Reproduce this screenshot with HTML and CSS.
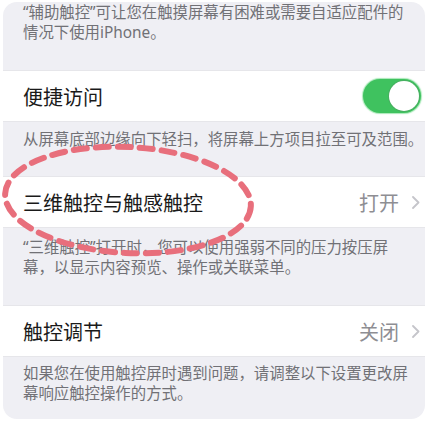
FILE: index.html
```html
<!DOCTYPE html>
<html lang="zh-CN">
<head>
<meta charset="utf-8">
<link rel="stylesheet" href="styles.css">
</head>
<body>
<div class="page">
  <div class="card">
    <p class="note note-top">“辅助触控”可让您在触摸屏幕有困难或需要自适应配件的<br>情况下使用iPhone。</p>
    <div class="row">
      <span class="label">便捷访问</span>
      <span class="toggle"><span class="knob"></span></span>
    </div>
    <p class="note">从屏幕底部边缘向下轻扫，将屏幕上方项目拉至可及范围。</p>
    <div class="row">
      <span class="label">三维触控与触感触控</span>
      <span class="value">打开</span>
      <svg class="chev" width="8" height="13" viewBox="0 0 8 13"><polyline points="1,1 6.5,6.5 1,12" fill="none" stroke="#c5c5ca" stroke-width="1.8" stroke-linecap="round" stroke-linejoin="round"/></svg>
    </div>
    <p class="note note-2">“三维触控”打开时，您可以使用强弱不同的压力按压屏<br>幕，以显示内容预览、操作或关联菜单。</p>
    <div class="row">
      <span class="label">触控调节</span>
      <span class="value">关闭</span>
      <svg class="chev" width="8" height="13" viewBox="0 0 8 13"><polyline points="1,1 6.5,6.5 1,12" fill="none" stroke="#c5c5ca" stroke-width="1.8" stroke-linecap="round" stroke-linejoin="round"/></svg>
    </div>
    <p class="note note-last">如果您在使用触控屏时遇到问题，请调整以下设置更改屏<br>幕响应触控操作的方式。</p>
  </div>
  <svg class="mark" width="431" height="434" viewBox="0 0 431 434">
    <ellipse cx="128" cy="200" rx="123" ry="53" transform="rotate(3 128 200)" fill="none" stroke="#e86f7c" stroke-width="6" stroke-dasharray="13 9" stroke-linecap="round"/>
  </svg>
</div>
</body>
</html>
```
FILE: styles.css
```css
html, body {
  margin: 0;
  padding: 0;
  background: #ffffff;
}
.page {
  position: relative;
  width: 431px;
  height: 434px;
  overflow: hidden;
}
.card {
  margin: 2px 6px 14px 3px;
  background: #efeff4;
  border-radius: 14px;
  overflow: hidden;
}
.note {
  margin: 0;
  padding: 8px 8px 26px 20px;
  font-family: "Noto Sans", "Noto Sans CJK SC", sans-serif;
  font-size: 15.4px;
  line-height: 20px;
  color: #717176;
  white-space: nowrap;
}
.note-top {
  padding-top: 1px;
  padding-bottom: 27px;
}
.note-2 {
  padding-top: 10px;
  padding-bottom: 27px;
}
.note-last {
  padding-top: 7px;
  padding-bottom: 15px;
}
.row {
  display: flex;
  align-items: center;
  height: 52px;
  padding: 0 5px 0 20px;
  background: #ffffff;
  border-top: 1px solid #e6e6ea;
  border-bottom: 1px solid #e6e6ea;
  box-sizing: border-box;
  font-family: "Noto Sans CJK SC", sans-serif;
}
.label {
  flex: 1;
  font-size: 20px;
  color: #1a1a1a;
}
.value {
  font-size: 20px;
  color: #8e8e93;
  margin-right: 13px;
}
.chev {
  display: block;
}
.toggle {
  position: relative;
  width: 58px;
  height: 34px;
  border-radius: 17px;
  background: #3fc25f;
  box-shadow: 0 0 1px 1px rgba(80, 210, 110, 0.5);
  margin-right: -1px;
}
.knob {
  position: absolute;
  right: 2px;
  top: 2px;
  width: 30px;
  height: 30px;
  border-radius: 50%;
  background: #ffffff;
  box-shadow: 0 0 0 1px rgba(90, 140, 100, 0.35);
}
.mark {
  position: absolute;
  left: 0;
  top: 0;
  pointer-events: none;
}
```
